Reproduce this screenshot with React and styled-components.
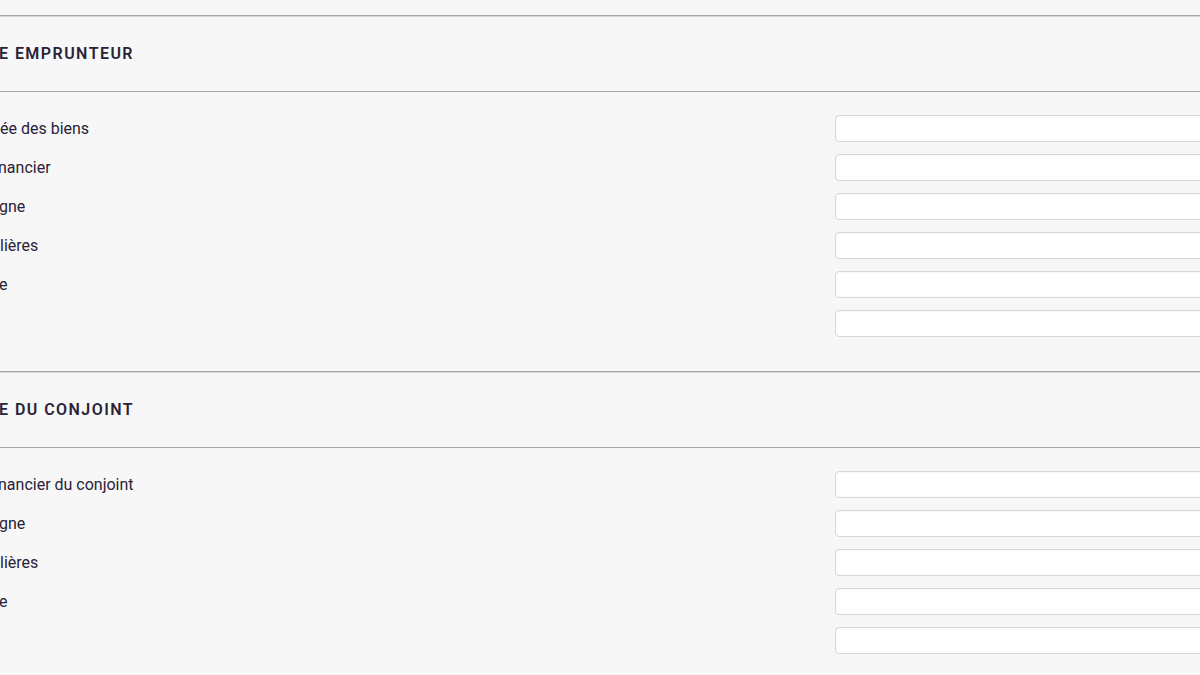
import React from "react";
import styled, { createGlobalStyle } from "styled-components";

const Global = createGlobalStyle`
  html, body { margin: 0; padding: 0; background: #f7f7f7; overflow: hidden; }
  body { font-family: Roboto, "Liberation Sans", sans-serif; color: #2a2238; }
`;

const Page = styled.div`
  width: 1260px;
  padding-top: 15px;
`;

const Section = styled.section`
  border-top: 1px solid #a8a6ab;
  box-shadow: inset 0 1px 0 #d6d5d8;
`;

const SectionHeader = styled.div`
  height: 75px;
  display: flex;
  align-items: center;
  border-bottom: 1px solid #a8a6ab;
`;

const Title = styled.h2`
  margin: 0 0 0 -1px;
  font-size: 16px;
  font-weight: 600;
  letter-spacing: 1.45px;
  color: #2a2238;
`;

const Form = styled.div`
  display: flex;
  flex-direction: column;
  gap: 12px;
  padding: 23px 0 ${(p) => p.$bottom}px;
`;

const Row = styled.div`
  display: grid;
  grid-template-columns: 835px 1fr;
  align-items: center;
`;

const Label = styled.label`
  font-size: 16px;
  line-height: 19px;
  color: #2a2238;
  white-space: nowrap;
  margin-left: ${(p) => p.$shift || 0}px;
`;

const Input = styled.input`
  box-sizing: border-box;
  height: 27px;
  width: 100%;
  background: #fff;
  border: 1px solid #d6d6d6;
  border-radius: 4px;
  box-shadow: inset 0 1px 1px rgba(0, 0, 0, 0.03);
  outline: none;
  padding: 0 8px;
`;

const borrower = [
  { label: "ée des biens", shift: 0 },
  { label: "nancier", shift: -2 },
  { label: "gne", shift: -1 },
  { label: "lières", shift: 0 },
  { label: "e", shift: -1 },
  { label: "", shift: 0 },
];

const spouse = [
  { label: "nancier du conjoint", shift: -2 },
  { label: "gne", shift: -1 },
  { label: "lières", shift: 0 },
  { label: "e", shift: -1 },
  { label: "", shift: 0 },
];

function Fields({ items, bottom }) {
  return (
    <Form $bottom={bottom}>
      {items.map((it, i) => (
        <Row key={i}>
          <Label $shift={it.shift}>{it.label}</Label>
          <Input type="text" />
        </Row>
      ))}
    </Form>
  );
}

export default function App() {
  return (
    <Page>
      <Global />
      <Section>
        <SectionHeader>
          <Title>E EMPRUNTEUR</Title>
        </SectionHeader>
        <Fields items={borrower} bottom={34} />
      </Section>
      <Section>
        <SectionHeader>
          <Title>E DU CONJOINT</Title>
        </SectionHeader>
        <Fields items={spouse} bottom={34} />
      </Section>
    </Page>
  );
}
